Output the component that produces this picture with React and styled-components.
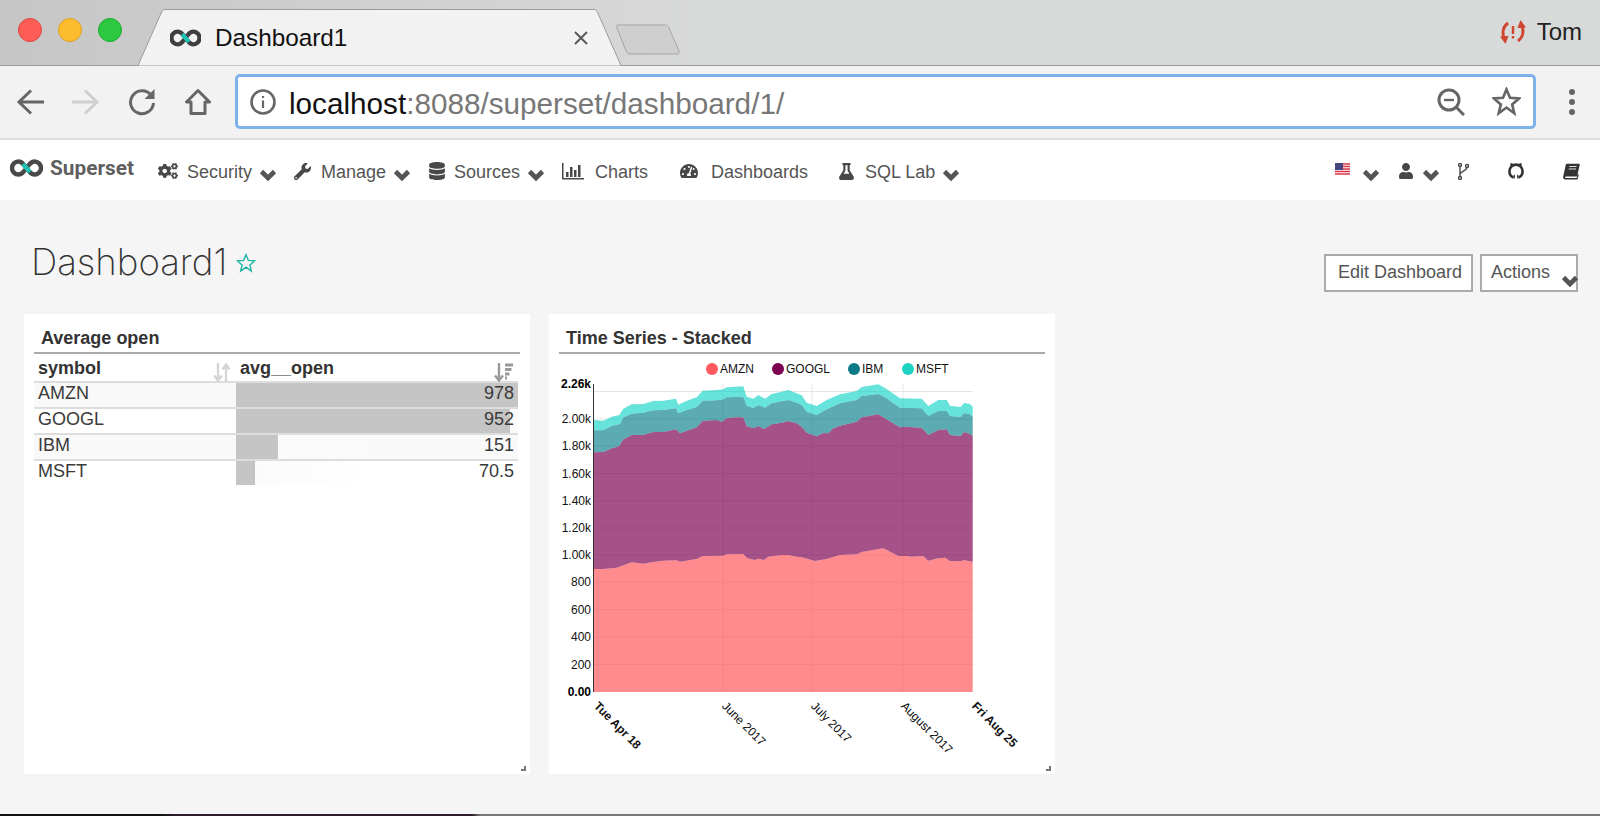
import React from "react";
import styled, { createGlobalStyle } from "styled-components";
import { FaCogs, FaWrench, FaDatabase, FaTachometerAlt, FaFlask, FaUser } from "react-icons/fa";

const GlobalStyle = createGlobalStyle`
  html, body { margin: 0; padding: 0; background: #f5f5f5; }
  body { font-family: "Liberation Sans", Arial, sans-serif; color: #555; overflow: hidden; }
  * { box-sizing: border-box; }
`;

// Chart data, traced from the stacked areas (x in zoomed chart units)
const msftTop = [[161,330],[190,332],[215,320],[238,315],[250,296],[275,283],[310,282],[340,273],[370,272],[408,266],[415,284],[440,272],[470,262],[488,242],[530,240],[550,238],[560,232],[610,229],[620,260],[640,266],[655,255],[675,266],[695,252],[725,245],[745,240],[770,250],[785,256],[800,278],[830,288],[860,270],[900,253],[950,243],[965,231],[1015,223],[1035,234],[1080,265],[1145,266],[1165,288],[1195,270],[1220,270],[1230,287],[1262,291],[1272,279],[1290,282],[1298,290]];
const ibmTop = [[161,361],[190,361],[215,348],[240,342],[250,322],[275,311],[310,308],[340,301],[370,300],[408,295],[415,310],[440,300],[470,291],[488,272],[530,271],[550,268],[560,262],[610,260],[620,287],[640,294],[655,285],[675,293],[695,280],[725,274],[745,270],[770,278],[785,285],[800,305],[830,315],[860,298],[900,280],[950,270],[965,258],[1015,252],[1035,262],[1080,293],[1145,295],[1165,318],[1195,303],[1220,302],[1230,318],[1262,321],[1272,309],[1290,313],[1298,320]];
const googlTop = [[161,427],[190,426],[215,415],[238,408],[250,388],[275,375],[310,374],[340,366],[370,366],[408,358],[420,370],[440,362],[470,352],[488,332],[530,330],[545,335],[560,325],[580,322],[610,322],[620,348],[640,355],[655,348],[672,357],[695,343],[725,338],[745,333],[770,340],[785,350],[800,368],[830,379],[850,369],[865,370],[880,355],[900,347],[950,335],[965,322],[1015,313],[1035,325],[1080,352],[1095,350],[1145,353],[1165,375],[1195,360],[1220,358],[1230,375],[1262,378],[1272,366],[1290,372],[1298,378]];
const amznTop = [[161,87],[190,87],[230,83],[275,67],[310,71],[340,66],[370,62],[410,61],[420,65],[470,57],[488,48],[550,47],[560,43],[610,42],[622,55],[645,60],[655,56],[672,60],[685,50],[725,45],[745,45],[770,50],[785,52],[825,63],[860,57],[900,45],[950,43],[965,36],[1030,25],[1045,32],[1075,48],[1100,48],[1115,50],[1150,48],[1165,62],[1195,55],[1215,53],[1230,63],[1262,64],[1272,60],[1298,66]];

const toPage = (points, top) => points.map(([x, y]) => [540 + x / 3, top + y / 3]);
const line = (pts) => pts.map(([x, y]) => `${x.toFixed(1)},${y.toFixed(1)}`).join(" L");
const between = (upper, lower) =>
  `M${line(upper)} L${line([...lower].reverse())} Z`;

const msft = toPage(msftTop, 310);
const ibm = toPage(ibmTop, 310);
const googl = toPage(googlTop, 310);
const amzn = toPage(amznTop, 540);
const floor = [[593.7, 692], [972.7, 692]];

const layers = [
  { color: "#ff5a5f", opacity: 0.7, d: between(amzn, floor) },
  { color: "#7b0051", opacity: 0.68, d: between(googl, amzn) },
  { color: "#007a87", opacity: 0.64, d: between(ibm, googl) },
  { color: "#00d1c1", opacity: 0.6, d: between(msft, ibm) },
];

const legend = [
  { name: "AMZN", color: "#ff5a5f", x: 712 },
  { name: "GOOGL", color: "#7b0051", x: 778 },
  { name: "IBM", color: "#0b7a87", x: 854 },
  { name: "MSFT", color: "#1fd3c3", x: 908 },
];

const yTicks = [
  { label: "2.00k", y: 419 },
  { label: "1.80k", y: 446 },
  { label: "1.60k", y: 473.5 },
  { label: "1.40k", y: 501 },
  { label: "1.20k", y: 528 },
  { label: "1.00k", y: 555 },
  { label: "800", y: 582 },
  { label: "600", y: 609.5 },
  { label: "400", y: 637 },
  { label: "200", y: 664.5 },
];

const xTicks = [
  { label: "Tue Apr 18", x: 596, bold: true },
  { label: "June 2017", x: 724 },
  { label: "July 2017", x: 813 },
  { label: "August 2017", x: 903 },
  { label: "Fri Aug 25", x: 974, bold: true },
];

const rows = [
  { symbol: "AMZN", value: 978, pct: 100 },
  { symbol: "GOOGL", value: 952, pct: 97.2 },
  { symbol: "IBM", value: 151, pct: 14.9 },
  { symbol: "MSFT", value: 70.5, pct: 6.8 },
];

const Window = styled.div`
  width: 1600px;
  height: 816px;
  display: flex;
  flex-direction: column;
  overflow: hidden;
  background: #f5f5f5;
`;

const TitleBar = styled.div`
  height: 66px;
  flex: none;
  display: flex;
  align-items: flex-end;
  padding-left: 18px;
  border-bottom: 1px solid #9a9a9a;
  background: linear-gradient(90deg, #c6c6c6, #d8d9d9 45%);
`;

const Lights = styled.div`
  align-self: flex-start;
  margin-top: 18px;
  display: flex;
  gap: 16px;
`;

const Light = styled.span`
  width: 24px;
  height: 24px;
  border-radius: 50%;
  background: ${(p) => p.$fill};
  border: 1px solid ${(p) => p.$edge};
`;

const Tab = styled.div`
  position: relative;
  width: 483px;
  height: 57px;
  margin-left: 16px;
  margin-bottom: -1px;
  display: flex;
  align-items: center;
  padding: 0 32px;
  z-index: 1;
`;

const TabShape = styled.svg`
  position: absolute;
  inset: 0;
`;

const TabLogo = styled.svg`
  position: relative;
  width: 31px;
  height: 18px;
`;

const TabTitle = styled.span`
  position: relative;
  margin-left: 14px;
  font-size: 24.3px;
  color: #111;
`;

const TabClose = styled.svg`
  position: relative;
  margin-left: auto;
  width: 16px;
  height: 16px;
`;

const NewTab = styled.svg`
  align-self: flex-start;
  margin-top: 24px;
  margin-left: -6px;
  flex: none;
`;

const Profile = styled.div`
  align-self: flex-start;
  margin: 19px 18px 0 auto;
  display: flex;
  align-items: center;
  gap: 11px;
  font-size: 24px;
  line-height: 26px;
  color: #222;
`;

const Toolbar = styled.div`
  height: 74px;
  flex: none;
  display: flex;
  align-items: flex-start;
  padding: 8px 0 0 16px;
  background: #f2f2f2;
  border-bottom: 2px solid #dcdcdc;
`;

const ToolSlot = styled.div`
  width: ${(p) => p.$w || 56}px;
  height: 55px;
  flex: none;
  display: flex;
  align-items: center;
`;

const UrlBox = styled.div`
  width: 1301px;
  height: 55px;
  flex: none;
  display: flex;
  align-items: center;
  padding: 0 12px;
  background: #fff;
  border: 3px solid #7fb2ea;
  border-radius: 5px;
`;

const UrlText = styled.div`
  margin: 4px 0 0 13px;
  font-size: 29.7px;
  color: #777;
  white-space: nowrap;
  b {
    font-weight: 400;
    color: #111;
  }
`;

const UrlActions = styled.div`
  margin-left: auto;
  display: flex;
  align-items: center;
  gap: 27px;
`;

const MenuDots = styled.div`
  margin-left: 33px;
  height: 55px;
  display: flex;
  flex-direction: column;
  justify-content: center;
  gap: 4px;
  span {
    width: 6px;
    height: 6px;
    border-radius: 50%;
    background: #666;
  }
`;

const Nav = styled.nav`
  height: 60px;
  flex: none;
  display: flex;
  align-items: center;
  padding: 4px 0 0 10px;
  background: #fff;
`;

const Brand = styled.div`
  width: 148px;
  display: flex;
  align-items: center;
  gap: 7px;
  font-family: Roboto, "Liberation Sans", sans-serif;
  font-weight: 700;
  font-size: 20.8px;
  color: #5f5f5f;
  margin-top: -8px;
`;

const NavItem = styled.div`
  width: ${(p) => p.$w}px;
  flex: none;
  display: flex;
  align-items: center;
  font-size: 18px;
  color: #555;
`;

const NavIcon = styled.span`
  width: ${(p) => p.$slot}px;
  flex: none;
  display: flex;
  align-items: center;
  color: #484848;
  margin-top: ${(p) => p.$lift ?? -2}px;
`;

const NavRight = styled.div`
  margin-left: auto;
  display: flex;
  align-items: center;
`;

const CaretSvg = styled.svg`
  width: 18px;
  height: 12px;
  margin-left: ${(p) => p.$gap ?? 7}px;
  margin-top: 5px;
  flex: none;
`;

const Caret = ({ gap }) => (
  <CaretSvg $gap={gap} viewBox="0 0 18 12" fill="none" stroke="#555" strokeWidth="4.6">
    <path d="M2.500 2.500L9 9l6.500-6.500" />
  </CaretSvg>
);

const Main = styled.main`
  flex: 1;
  min-height: 0;
`;

const PageHead = styled.div`
  margin-top: 44px;
  height: 70px;
  display: flex;
  align-items: flex-start;
  padding: 0 22px 0 31px;
`;

const PageTitle = styled.h1`
  margin: 0;
  font-family: Inter, "Liberation Sans", sans-serif;
  font-size: 36.6px;
  line-height: 36px;
  font-weight: 200;
  color: #333;
`;

const TitleStar = styled.span`
  display: flex;
  margin: 9px 0 0 9px;
`;

const Buttons = styled.div`
  margin: 10px 0 0 auto;
  display: flex;
  gap: 7px;
`;

const Button = styled.div`
  position: relative;
  width: ${(p) => p.$w}px;
  height: 38px;
  display: flex;
  align-items: center;
  padding: 0 0 2px ${(p) => p.$pad}px;
  background: #fff;
  border: 2px solid #aaa;
  font-size: 18px;
  color: #555;
`;

const ButtonCaret = styled.svg`
  position: absolute;
  right: -3px;
  top: 19px;
  width: 18px;
  height: 12px;
`;

const Cards = styled.div`
  display: flex;
  gap: 19px;
  padding-left: 24px;
`;

const Card = styled.section`
  position: relative;
  width: 506px;
  height: 460px;
  background: #fff;
`;

const CardTitle = styled.h2`
  margin: 0 10px;
  padding: 12px 0 2px 7px;
  height: 40px;
  font-size: 18px;
  line-height: 24px;
  font-weight: 700;
  color: #333;
  border-bottom: 2px solid #aaa;
`;

const Resize = styled.span`
  position: absolute;
  right: 4px;
  bottom: 3px;
  width: 5px;
  height: 5px;
  border-right: 2px solid #777;
  border-bottom: 2px solid #777;
`;

const Table = styled.div`
  margin: 0 12px 0 10px;
  font-size: 18px;
  color: #3a3a3a;
`;

const HeadRow = styled.div`
  height: 27px;
  display: grid;
  grid-template-columns: 202px 1fr;
  font-weight: 700;
  color: #333;
`;

const HeadCell = styled.div`
  display: flex;
  align-items: flex-start;
  justify-content: space-between;
  padding: 2px 5px 0 4px;
  line-height: 24px;
`;

const SortIcon = styled.svg`
  margin-top: 7px;
  flex: none;
`;

const Row = styled.div`
  height: 26px;
  display: grid;
  grid-template-columns: 202px 1fr;
  border-top: 2px solid #ddd;
  background: ${(p) => (p.$odd ? "#f9f9f9" : "#fff")};
  line-height: 21px;
`;

const SymbolCell = styled.div`
  padding-left: 4px;
`;

const ValueCell = styled.div`
  position: relative;
  overflow: hidden;
  text-align: right;
  padding-right: 4px;
`;

const Bar = styled.span`
  position: absolute;
  left: 0;
  top: 0;
  bottom: 0;
  background: #c5c5c5;
`;

const BarFade = styled.span`
  position: absolute;
  top: 0;
  bottom: 0;
  width: 110px;
  background: linear-gradient(90deg, #fbfbfb, rgba(255, 255, 255, 0));
`;

const Value = styled.span`
  position: relative;
`;

const ChartSvg = styled.svg`
  display: block;
  font-family: "Liberation Sans", Arial, sans-serif;
`;

const BottomEdge = styled.div`
  height: 2px;
  flex: none;
  background: linear-gradient(90deg, #111 0, #111 10%, #2c1c2c 11%, #2c1c2c 29.500%, #777 30%, #777 100%);
`;

const Glyph = ({ w = 28, h = 28, stroke = "#666", sw = 3, children }) => (
  <svg width={w} height={h} viewBox={`0 0 ${w} ${h}`} fill="none" stroke={stroke} strokeWidth={sw}>
    {children}
  </svg>
);

const InfinityMark = ({ dark }) => (
  <>
    <path
      d="M16 9C13 5 11.500 2.500 8 2.500A6.500 6.500 0 0 0 8 15.500C11.500 15.500 13 13 16 9C19 5 20.500 2.500 24 2.500A6.500 6.500 0 0 1 24 15.500C20.500 15.500 19 13 16 9"
      stroke={dark}
      strokeWidth="4.4"
      fill="none"
    />
    <path d="M12.600 5L19.400 13" stroke="#1fc3b4" strokeWidth="4.4" fill="none" />
  </>
);

const Star = ({ size, stroke, sw }) => (
  <svg width={size} height={size} viewBox="0 0 24 24" fill="none" stroke={stroke} strokeWidth={sw} strokeLinejoin="miter">
    <path d="M12 2l2.900 6.900 7.400.6-5.600 4.900 1.700 7.300L12 17l-6.400 4.700 1.700-7.300-5.600-4.900 7.400-.6z" />
  </svg>
);

export default function App() {
  return (
    <Window>
      <GlobalStyle />
      <TitleBar>
        <Lights>
          <Light $fill="#fc5e57" $edge="#e0443e" />
          <Light $fill="#fdbc2e" $edge="#dfa023" />
          <Light $fill="#2bc840" $edge="#1dad2b" />
        </Lights>
        <Tab>
          <TabShape width="483" height="57" viewBox="0 0 483 57">
            <path d="M0 56.500L23.600 3C24.500 1 25.500 .5 28 .5H455C457.500 .5 458.500 1 459.400 3L483 56.500" fill="#f2f2f2" stroke="#9a9a9a" />
          </TabShape>
          <TabLogo viewBox="0 0 32 18">
            <InfinityMark dark="#3f3f3f" />
          </TabLogo>
          <TabTitle>Dashboard1</TabTitle>
          <TabClose viewBox="0 0 16 16">
            <path d="M2 2L14 14M14 2L2 14" stroke="#555" strokeWidth="1.800" />
          </TabClose>
        </Tab>
        <NewTab width="66" height="32" viewBox="0 0 66 32">
          <path d="M3 1H50C52 1 53 2 54 4L64 27C65 29 64 30 62 30H15C13 30 12 29 11 27L2 4C1 2 1.500 1 3 1Z" fill="#cfcfcf" stroke="#a5a5a5" />
        </NewTab>
        <Profile>
          <svg width="26" height="26" viewBox="0 0 26 26" fill="none" stroke="#d0452f" strokeWidth="2.800">
            <path d="M8 4C2.500 8 1.500 15 5 20" />
            <path d="M0 17.500L8.500 17 5.500 25z" fill="#d0452f" stroke="none" />
            <path d="M18 22C23.500 18 24.500 11 21 6" />
            <path d="M26 8.500L17.500 9 20.500 1z" fill="#d0452f" stroke="none" />
            <path d="M13 7v8M13 17v2.500" strokeWidth="2.400" />
          </svg>
          Tom
        </Profile>
      </TitleBar>

      <Toolbar>
        <ToolSlot>
          <Glyph>
            <path d="M28 14H4M15 2.500L3 14l12 11.500" />
          </Glyph>
        </ToolSlot>
        <ToolSlot>
          <Glyph stroke="#cfcfcf">
            <path d="M0 14H24M13 2.500L25 14 13 25.500" />
          </Glyph>
        </ToolSlot>
        <ToolSlot>
          <Glyph>
            <path d="M23 7A11.500 11.500 0 1 0 25.500 15" />
            <path d="M26.500 1v10h-10z" fill="#666" stroke="none" />
          </Glyph>
        </ToolSlot>
        <ToolSlot $w={51}>
          <Glyph>
            <path d="M14 2.500L2.500 14H7V25.500H21V14H25.500Z" strokeLinejoin="round" />
          </Glyph>
        </ToolSlot>
        <UrlBox>
          <Glyph w={26} h={26} sw={2.600}>
            <circle cx="13" cy="13" r="11.500" />
            <path d="M13 11.500V19M13 7V9" strokeWidth="2.200" />
          </Glyph>
          <UrlText>
            <b>localhost</b>:8088/superset/dashboard/1/
          </UrlText>
          <UrlActions>
            <Glyph>
              <circle cx="12" cy="12" r="10" />
              <path d="M7 12H17" strokeWidth="2.400" />
              <path d="M19 19L27 27" />
            </Glyph>
            <Star size={29} stroke="#666" sw={2.200} />
          </UrlActions>
        </UrlBox>
        <MenuDots>
          <span />
          <span />
          <span />
        </MenuDots>
      </Toolbar>

      <Nav>
        <Brand>
          <svg width="33" height="18" viewBox="0 0 32 18">
            <InfinityMark dark="#484848" />
          </svg>
          Superset
        </Brand>
        <NavItem $w={136}>
          <NavIcon $slot={29}><FaCogs size={20} /></NavIcon>
          Security
          <Caret />
        </NavItem>
        <NavItem $w={134}>
          <NavIcon $slot={27}><FaWrench size={17} /></NavIcon>
          Manage
          <Caret />
        </NavItem>
        <NavItem $w={134}>
          <NavIcon $slot={26}><FaDatabase size={18} /></NavIcon>
          Sources
          <Caret />
        </NavItem>
        <NavItem $w={118}>
          <NavIcon $slot={33}>
            <svg width="22" height="18" viewBox="0 0 22 18" fill="#484848">
              <path d="M0 1h1.500v15H22v1.500H0z" />
              <path d="M4 10h2.500v5H4zM8 5h2.500v10H8zM12 8h2.500v7H12zM16 3h2.500v12H16z" />
            </svg>
          </NavIcon>
          Charts
        </NavItem>
        <NavItem $w={158}>
          <NavIcon $slot={31}><FaTachometerAlt size={18} /></NavIcon>
          Dashboards
        </NavItem>
        <NavItem $w={130}>
          <NavIcon $slot={27}><FaFlask size={17} /></NavIcon>
          SQL Lab
          <Caret />
        </NavItem>
        <NavRight>
          <NavItem $w={63}>
            <NavIcon $slot={27} $lift={-5}>
              <svg width="15" height="13" viewBox="0 0 15 13">
                <rect width="15" height="13" fill="#fff" />
                <path d="M0 1h15M0 3.500h15M0 6h15M0 8.500h15M0 11h15" stroke="#d9344a" strokeWidth="1.300" />
                <rect width="8" height="7" fill="#46467f" />
              </svg>
            </NavIcon>
            <Caret gap={0} />
          </NavItem>
          <NavItem $w={60}>
            <NavIcon $slot={24}><FaUser size={16} /></NavIcon>
            <Caret gap={0} />
          </NavItem>
          <NavItem $w={50}>
            <NavIcon $slot={50}>
              <svg width="11" height="17" viewBox="0 0 11 17" fill="none" stroke="#484848" strokeWidth="1.400">
                <circle cx="2" cy="2" r="1.500" />
                <circle cx="9" cy="3" r="1.500" />
                <circle cx="2" cy="15" r="1.500" />
                <path d="M2 3.500V13.500M2 11C4 8 8 8 9 4.500" />
              </svg>
            </NavIcon>
          </NavItem>
          <NavItem $w={55}>
            <NavIcon $slot={55}>
              <svg width="16" height="16" viewBox="0 0 16 16" fill="none" stroke="#333" strokeWidth="2.600">
                <path d="M5.500 14.500C2.800 13.500 1.400 11 1.400 8.300 1.400 4.600 4.300 1.600 8 1.600s6.600 3 6.600 6.700c0 2.700-1.400 5.200-4.100 6.200" />
                <path d="M3 4L3.200 .8 6 2.200M13 4L12.800 .8 10 2.200" strokeWidth="1.400" />
                <path d="M6.300 15.600V11.800M9.700 15.600V11.800" strokeWidth="1.200" />
              </svg>
            </NavIcon>
          </NavItem>
          <NavItem $w={37}>
            <NavIcon $slot={37}>
              <svg width="17" height="17" viewBox="0 0 17 17">
                <path d="M4 .8H15.800C16.500 .8 16.900 1.300 16.700 2L14 13.500H3.200C2.300 13.500 1.800 14.400 2.400 15.100H13.700L14.800 11 15.800 11.500 14.500 16.400H2C.5 16.400 -.2 15 .2 13.500L2.700 2C2.900 1.200 3.300 .8 4 .8Z" fill="#333" />
                <path d="M6.300 3.500H13.500M5.800 6H13" stroke="#ddd" strokeWidth="1.200" />
              </svg>
            </NavIcon>
          </NavItem>
        </NavRight>
      </Nav>

      <Main>
        <PageHead>
          <PageTitle>Dashboard1</PageTitle>
          <TitleStar>
            <Star size={20} stroke="#1fb5a6" sw={1.700} />
          </TitleStar>
          <Buttons>
            <Button $w={149} $pad={12}>Edit Dashboard</Button>
            <Button $w={98} $pad={9}>
              Actions
              <ButtonCaret viewBox="0 0 18 12" fill="none" stroke="#555" strokeWidth="4.600">
                <path d="M2.500 2.500L9 9l6.500-6.500" />
              </ButtonCaret>
            </Button>
          </Buttons>
        </PageHead>

        <Cards>
          <Card>
            <CardTitle>Average open</CardTitle>
            <Table>
              <HeadRow>
                <HeadCell>
                  symbol
                  <SortIcon width="18" height="19" viewBox="0 0 18 19" fill="none" stroke="#d5d5d5" strokeWidth="2.400">
                    <path d="M5 0V17M1 12.500L5 17.500 9 12.500" />
                    <path d="M13 19V2M9.500 6.500L13 1.500 16.500 6.500" />
                  </SortIcon>
                </HeadCell>
                <HeadCell>
                  avg__open
                  <SortIcon width="19" height="19" viewBox="0 0 19 19" fill="none" stroke="#999" strokeWidth="2.400">
                    <path d="M5 0V17M1 12.500L5 17.500 9 12.500" />
                    <path d="M11 2H19M11 6.500H17.500M11 11H15.500M11 15H13" strokeWidth="3" />
                  </SortIcon>
                </HeadCell>
              </HeadRow>
              {rows.map((row, i) => (
                <Row key={row.symbol} $odd={i % 2 === 0}>
                  <SymbolCell>{row.symbol}</SymbolCell>
                  <ValueCell>
                    <BarFade style={{ left: `${row.pct}%` }} />
                    <Bar style={{ width: `${row.pct}%` }} />
                    <Value>{row.value}</Value>
                  </ValueCell>
                </Row>
              ))}
            </Table>
            <Resize />
          </Card>

          <Card>
            <CardTitle>Time Series - Stacked</CardTitle>
            <ChartSvg width="506" height="420" viewBox="549 354 506 420">
              {legend.map((item) => (
                <g key={item.name}>
                  <circle cx={item.x} cy="369" r="6" fill={item.color} />
                  <text x={item.x + 8} y="373" fontSize="12" fill="#111">{item.name}</text>
                </g>
              ))}
              {[723, 812, 903].map((x) => (
                <path key={x} d={`M${x} 384V692`} stroke="#e5e5e5" />
              ))}
              {[...yTicks.map((t) => t.y), 391.5].map((y) => (
                <path key={y} d={`M594 ${y}H973`} stroke="#e5e5e5" />
              ))}
              {layers.map((layer) => (
                <path key={layer.color} d={layer.d} fill={layer.color} fillOpacity={layer.opacity} />
              ))}
              <path d="M593.500 384V692" stroke="#333" />
              <text x="591" y="388" fontSize="12" fontWeight="700" textAnchor="end" fill="#000">2.26k</text>
              <text x="591" y="696" fontSize="12" fontWeight="700" textAnchor="end" fill="#000">0.00</text>
              {yTicks.map((t) => (
                <text key={t.label} x="591" y={t.y + 4} fontSize="12" textAnchor="end" fill="#111">{t.label}</text>
              ))}
              {xTicks.map((t) => (
                <text
                  key={t.label}
                  x={t.x}
                  y="708"
                  fontSize="12"
                  fontWeight={t.bold ? 700 : 400}
                  fill="#111"
                  transform={`rotate(45 ${t.x} 704)`}
                >
                  {t.label}
                </text>
              ))}
            </ChartSvg>
            <Resize />
          </Card>
        </Cards>
      </Main>
      <BottomEdge />
    </Window>
  );
}
